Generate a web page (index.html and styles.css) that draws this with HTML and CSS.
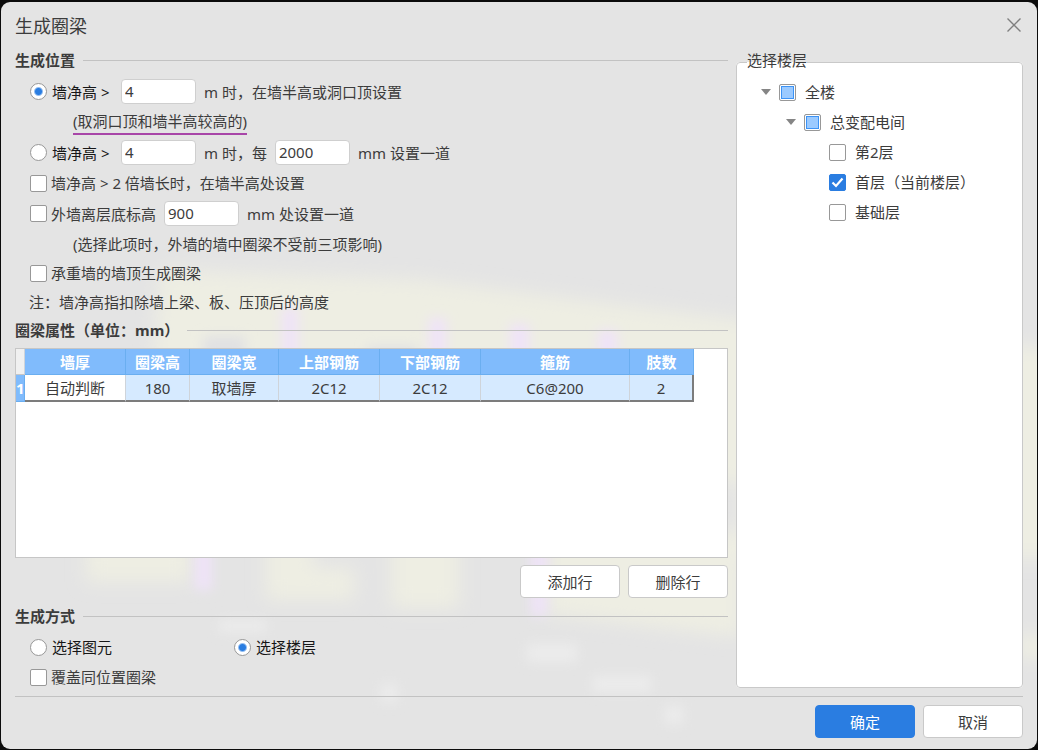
FILE: index.html
```html
<!DOCTYPE html>
<html lang="zh-CN">
<head>
<meta charset="utf-8">
<title>生成圈梁</title>
<link rel="stylesheet" href="styles.css">
</head>
<body>
<main class="dialog">
  <svg class="backdrop" viewBox="0 0 1036 747" preserveAspectRatio="none" aria-hidden="true">
    <defs>
      <filter id="soft" x="-20%" y="-20%" width="140%" height="140%"><feGaussianBlur stdDeviation="9"/></filter>
      <filter id="glow" x="-100%" y="-50%" width="300%" height="200%"><feGaussianBlur stdDeviation="6"/></filter>
    </defs>
    <g fill="#eeeee3" filter="url(#soft)">
      <path d="M160 268 L420 278 L740 318 L1060 348 V556 H740 V480 H140 Z"/>
      <path d="M85 530 H190 V580 H85 Z"/>
      <path d="M265 530 H312 V566 H353 V598 H265 Z"/>
      <path d="M390 530 H458 V606 H390 Z"/>
      <path d="M545 530 H740 V635 L545 612 Z"/>
      <path d="M1015 634 H1050 V656 H1015 Z"/>
    </g>
    <g fill="#efe3f8" filter="url(#glow)">
      <path d="M281 306 H297 V370 H281 Z"/>
      <path d="M428 316 H445 V370 H428 Z"/>
      <path d="M509 322 H528 V370 H509 Z"/>
      <path d="M597 328 H616 V370 H597 Z"/>
      <path d="M194 540 H211 V588 H194 Z"/>
      <path d="M530 540 H546 V614 H530 Z"/>
    </g>
    <g fill="#e1e1e3" filter="url(#glow)">
      <path d="M202 334 H244 V360 H202 Z"/>
      <path d="M366 344 H416 V360 H366 Z"/>
    </g>
    <g fill="#ececec" filter="url(#glow)">
      <path d="M218 618 H265 V630 H218 Z"/>
      <path d="M526 642 H576 V660 H526 Z"/>
      <path d="M592 674 H650 V690 H592 Z"/>
      <path d="M664 704 H682 V722 H664 Z"/>
      <path d="M380 682 H396 V700 H380 Z"/>
    </g>
  </svg>

  <header class="titlebar">
    <h1 class="title">生成圈梁</h1>
    <button class="close" type="button" aria-label="关闭">
      <svg width="14" height="14" viewBox="0 0 14 14"><path d="M0.5 0.5 L13.5 13.5 M13.5 0.5 L0.5 13.5" stroke="#7f7f7f" stroke-width="1.4" fill="none"/></svg>
    </button>
  </header>

  <div class="content">
    <div class="settings">
      <section class="group">
        <h2 class="heading">生成位置</h2>
        <div class="row row-field">
          <label class="choice choice-height"><input class="radio" type="radio" name="place" checked>墙净高 &gt;</label>
          <input class="field" type="text" value="4" aria-label="墙净高">
          <span>m 时，在墙半高或洞口顶设置</span>
        </div>
        <div class="row row-hint"><span class="marked">(取洞口顶和墙半高较高的)</span></div>
        <div class="row row-field">
          <label class="choice choice-height"><input class="radio" type="radio" name="place">墙净高 &gt;</label>
          <input class="field" type="text" value="4" aria-label="墙净高">
          <span>m 时，每</span>
          <input class="field" type="text" value="2000" aria-label="间距">
          <span>mm 设置一道</span>
        </div>
        <div class="row">
          <label class="choice"><input class="check" type="checkbox">墙净高 &gt; 2 倍墙长时，在墙半高处设置</label>
        </div>
        <div class="row row-field">
          <label class="choice"><input class="check" type="checkbox">外墙离层底标高</label>
          <input class="field" type="text" value="900" aria-label="外墙离层底标高">
          <span>mm 处设置一道</span>
        </div>
        <div class="row row-hint">(选择此项时，外墙的墙中圈梁不受前三项影响)</div>
        <div class="row row-tight">
          <label class="choice"><input class="check" type="checkbox">承重墙的墙顶生成圈梁</label>
        </div>
        <p class="row note">注：墙净高指扣除墙上梁、板、压顶后的高度</p>
      </section>

      <section class="group group-table">
        <h2 class="heading heading-wide">圈梁属性（单位：mm）</h2>
        <div class="sheet">
          <table class="grid">
            <colgroup><col class="c-index"><col class="c-101"><col class="c-64"><col class="c-89"><col class="c-101"><col class="c-101"><col class="c-149"><col class="c-64"></colgroup>
            <thead>
              <tr><td class="corner"></td><th>墙厚</th><th>圈梁高</th><th>圈梁宽</th><th>上部钢筋</th><th>下部钢筋</th><th>箍筋</th><th>肢数</th></tr>
            </thead>
            <tbody>
              <tr><th class="index">1</th><td class="current">自动判断</td><td>180</td><td>取墙厚</td><td>2C12</td><td>2C12</td><td>C6@200</td><td>2</td></tr>
            </tbody>
          </table>
        </div>
        <div class="actions">
          <button class="button" type="button">添加行</button>
          <button class="button" type="button">删除行</button>
        </div>
      </section>

      <section class="group">
        <h2 class="heading">生成方式</h2>
        <div class="row modes">
          <label class="choice choice-dark"><input class="radio" type="radio" name="mode">选择图元</label>
          <label class="choice choice-dark"><input class="radio" type="radio" name="mode" checked>选择楼层</label>
        </div>
        <div class="row">
          <label class="choice"><input class="check" type="checkbox">覆盖同位置圈梁</label>
        </div>
      </section>
    </div>

    <fieldset class="floors">
      <legend class="legend">选择楼层</legend>
      <ul class="tree">
        <li>
          <div class="node"><button class="toggle" type="button" aria-label="折叠"></button><label class="leaf"><input class="check partial" type="checkbox">全楼</label></div>
          <ul class="tree branch">
            <li>
              <div class="node"><button class="toggle" type="button" aria-label="折叠"></button><label class="leaf"><input class="check partial" type="checkbox">总变配电间</label></div>
              <ul class="tree branch leaves">
                <li class="node"><label class="leaf"><input class="check" type="checkbox">第2层</label></li>
                <li class="node"><label class="leaf"><input class="check" type="checkbox" checked>首层（当前楼层）</label></li>
                <li class="node"><label class="leaf"><input class="check" type="checkbox">基础层</label></li>
              </ul>
            </li>
          </ul>
        </li>
      </ul>
    </fieldset>
  </div>

  <footer class="footer">
    <button class="button primary" type="button">确定</button>
    <button class="button" type="button">取消</button>
  </footer>
</main>
</body>
</html>
```
FILE: styles.css
```css
* { box-sizing: border-box; }

body {
  margin: 0;
  padding: 2px 1px 1px;
  min-height: 100vh;
  display: flex;
  background: #0b0b0b;
  font: 15px/24px "Noto Sans", "Noto Sans CJK SC", sans-serif;
  color: #3c3c3c;
}

button, input { font: inherit; color: inherit; margin: 0; }
h1, h2, p, ul { margin: 0; padding: 0; }

.dialog {
  position: relative;
  z-index: 0;
  flex: 1;
  display: flex;
  flex-direction: column;
  padding: 0 14px;
  border-radius: 9px;
  background: #e4e4e4;
  overflow: hidden;
}

.backdrop {
  position: absolute;
  inset: 0;
  z-index: -1;
  width: 100%;
  height: 100%;
}

.titlebar {
  display: flex;
  align-items: center;
  justify-content: space-between;
  height: 46px;
}
.title { padding-top: 2px; font-size: 18px; font-weight: 400; }
.close {
  display: flex;
  padding: 2px;
  border: 0;
  background: none;
}

.content {
  flex: 1;
  display: grid;
  grid-template-columns: minmax(0, 1fr) 287px;
  gap: 8px;
}
.settings { display: flex; flex-direction: column; padding-bottom: 4px; }

.heading {
  display: flex;
  align-items: center;
  gap: 8px;
  margin-bottom: 4px;
  font-size: 15px;
  font-weight: 700;
  line-height: 24px;
}
.heading::after {
  content: "";
  flex: 1;
  height: 1px;
  background: #c2c2c2;
}
.heading-wide { margin-bottom: 6px; }

.row {
  display: flex;
  align-items: center;
  gap: 8px;
  height: 30px;
  padding-left: 15px;
}
.row-field { height: 31px; }
.row-tight { height: 28px; }
.row-hint { padding-left: 58px; }
.note { padding-left: 14px; }

.marked { border-bottom: 2px solid #a846a8; }

.choice, .leaf { display: flex; align-items: center; gap: 4px; }
.choice-height { gap: 5px; width: 83px; color: #161616; }
.choice-dark { gap: 5px; width: 204px; color: #161616; }
.modes { gap: 0; }
.leaf { gap: 9px; }

.radio, .check {
  appearance: none;
  flex: none;
  width: 17px;
  height: 17px;
  border: 1px solid #989898;
  border-radius: 2px;
  background: #fff;
}
.radio { border-radius: 50%; }
.radio:checked { background: radial-gradient(circle, #2a7de1 3px, #fff 5px); }
.check:checked {
  border-color: #2a7de1;
  background: #2a7de1 url("data:image/svg+xml,%3Csvg xmlns='http://www.w3.org/2000/svg' viewBox='0 0 15 15'%3E%3Cpath d='M2.5 7.5 L6 11 L12.5 3.5' fill='none' stroke='white' stroke-width='2.2'/%3E%3C/svg%3E");
}
.partial {
  padding: 1px;
  background: linear-gradient(#9bcaff, #9bcaff) content-box, #fff;
  box-shadow: inset 0 0 0 1px #fff, inset 0 0 0 2px #3d93f5;
}

.field {
  width: 75px;
  height: 25px;
  padding: 0 4px 2px 3px;
  border: 1px solid #cfcfcf;
  border-radius: 4px;
  background: #fff;
}

.group-table { flex: 1; display: flex; flex-direction: column; padding-top: 1px; }
.sheet {
  flex: 1;
  border: 1px solid #c6c6c6;
  background: #fff;
}
.grid {
  table-layout: fixed;
  width: 678px;
  max-width: 100%;
  border-collapse: separate;
  border-spacing: 0;
  text-align: center;
}
.c-index { width: 9px; }
.c-64 { width: 64px; }
.c-89 { width: 89px; }
.c-101 { width: 101px; }
.c-149 { width: 149px; }
.grid th, .grid td { height: 26px; padding: 0; }
.grid tbody th, .grid tbody td { height: 27px; }
.grid th {
  border-right: 1px solid #6aaef0;
  border-bottom: 1px solid #6aaef0;
  background: #80bbfc;
  color: #fff;
  font-weight: 700;
}
.grid td {
  border-right: 1px solid #cfd4da;
  border-bottom: 2px solid #7c7c7c;
  background: #d6eaff;
}
.grid tbody td:last-child { border-right: 2px solid #7c7c7c; }
.grid .corner { border-bottom: 1px solid #c6c6c6; background: #f0f0f0; }
.grid .current { background: #fff; }

.actions {
  display: flex;
  justify-content: flex-end;
  gap: 8px;
  padding: 7px 0 6px;
}
.button {
  width: 100px;
  height: 33px;
  padding: 0;
  border: 1px solid #c9c9c9;
  border-radius: 4px;
  background: #fff;
}
.primary { border-color: #2a7de1; background: #2a7de1; color: #fff; }

.floors {
  min-width: 0;
  margin: 0 0 8px;
  padding: 1px 16px 0 24px;
  border: 1px solid #c9c9c9;
  border-radius: 4px;
  background: #fff;
}
.legend { margin-left: -14px; padding: 0 0 4px; }
.tree { list-style: none; }
.branch { padding-left: 25px; }
.node { display: flex; align-items: center; gap: 8px; height: 30px; }
.toggle {
  width: 10px;
  height: 6px;
  padding: 0;
  border: 0;
  background: #858585;
  clip-path: polygon(0 0, 100% 0, 50% 100%);
}
.leaves { padding-left: 43px; }

.footer {
  display: flex;
  justify-content: flex-end;
  gap: 8px;
  padding: 8px 0 11px;
  border-top: 1px solid #c2c2c2;
}
```
